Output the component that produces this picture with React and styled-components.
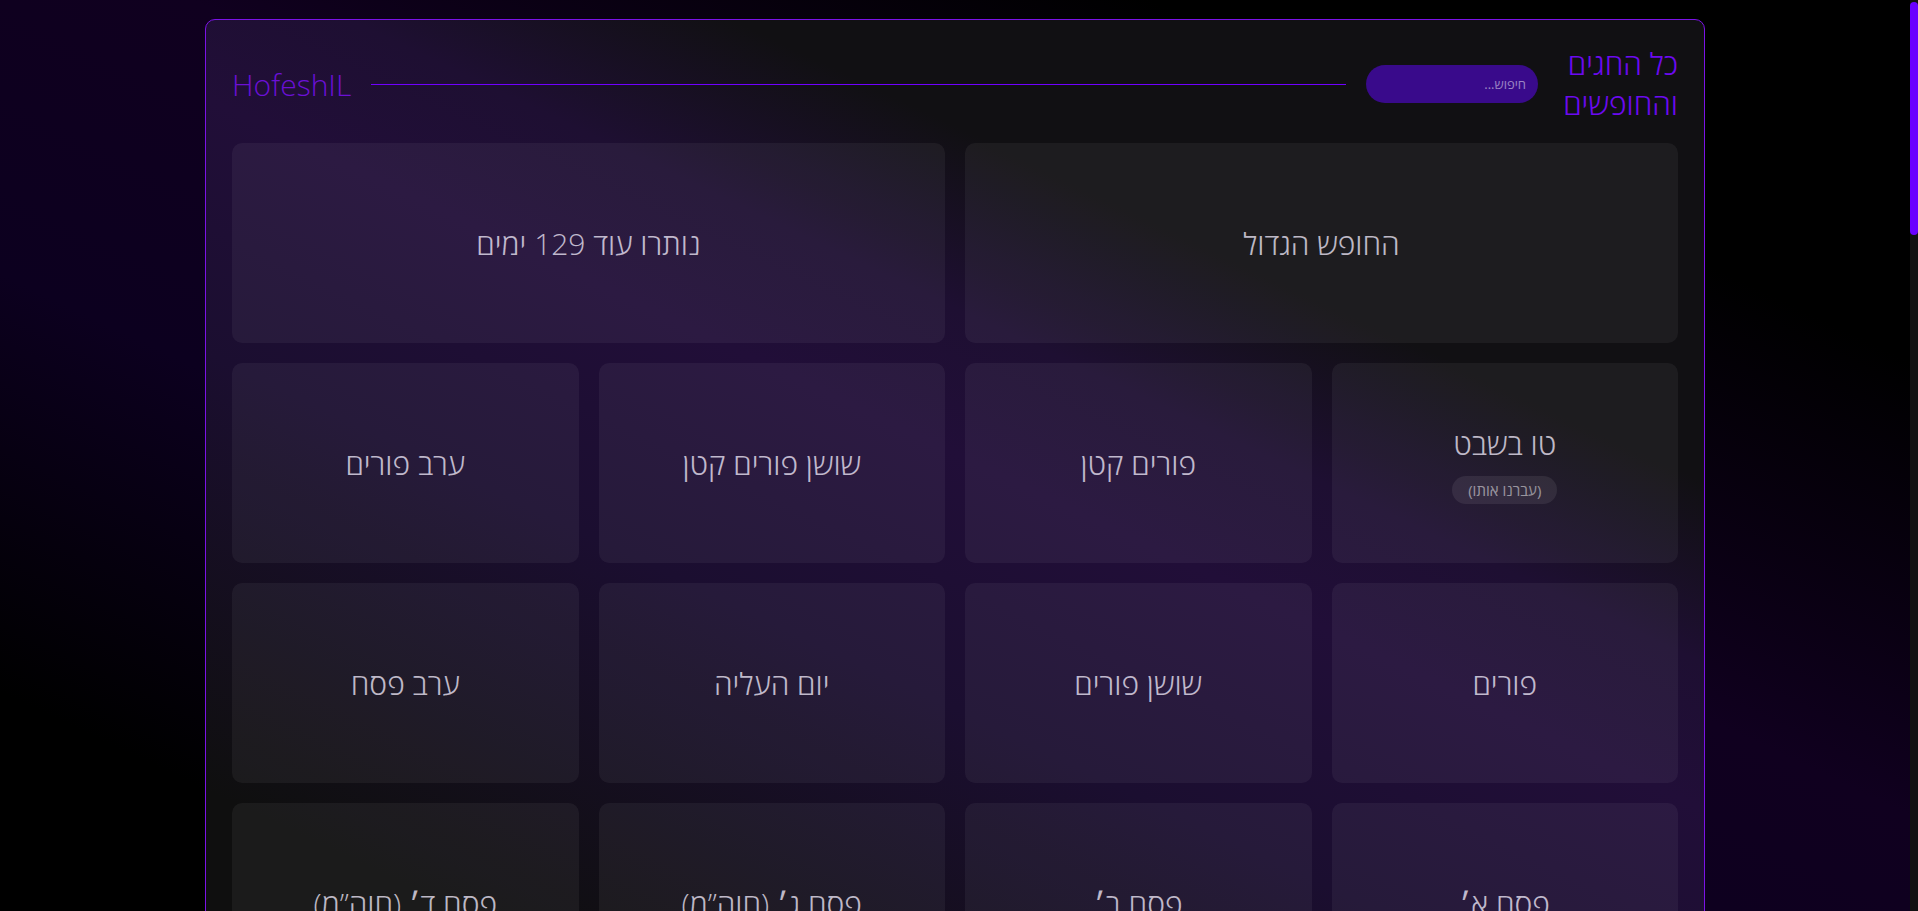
import React from 'react';
import styled, { createGlobalStyle } from 'styled-components';

const GlobalStyle = createGlobalStyle`
  html, body {
    margin: 0;
    padding: 0;
  }
  body {
    font-family: "Open Sans", "Liberation Sans", "DejaVu Sans", sans-serif;
    background: linear-gradient(to top right, #000 12%, #0c001f 35%, #10001f 55%, #000 80%);
    background-attachment: fixed;
    min-height: 100vh;
  }
  ::-webkit-scrollbar {
    width: 0;
  }
`;

const Page = styled.div`
  padding: 19px 8px 19px 0;
`;

// the page's own scrollbar is hidden in the shot, so draw the styled rail on top
const ScrollRail = styled.div`
  position: fixed;
  top: 0;
  right: 0;
  width: 8px;
  height: 100vh;
  background: #111;
  z-index: 10;
`;

const ScrollThumb = styled.div`
  margin-top: 2px;
  height: 233px;
  border-radius: 4px;
  background: #6a00ff;
`;

const Panel = styled.main`
  box-sizing: border-box;
  width: 1500px;
  margin: 0 auto;
  padding: 24px 26px 26px;
  border: 1px solid #7b12e6;
  border-radius: 10px;
  background: linear-gradient(to top right, #0f0f0f 12%, #1b0e30 36%, #210e38 50%, #1e0f32 58%, #111013 68%);
  background-attachment: fixed;
`;

const Header = styled.header`
  display: flex;
  align-items: center;
  gap: 20px;
  height: 80px;
  margin-bottom: 19px;
`;

const PageTitle = styled.h1`
  margin: 0;
  font-size: 30px;
  line-height: 40px;
  font-weight: 300;
  color: #6c0af0;
  width: 120px;
  text-align: right;
`;

const Search = styled.input`
  box-sizing: border-box;
  width: 172px;
  height: 38px;
  border: none;
  border-radius: 19px;
  padding: 0 12px;
  background: #390a8b;
  color: #ddd;
  font-family: inherit;
  font-size: 13px;
  outline: none;
  &::placeholder {
    color: rgba(255, 255, 255, 0.5);
  }
`;

const Rule = styled.div`
  flex: 1;
  height: 1px;
  background: #7000ff;
`;

const Logo = styled.div`
  font-size: 30px;
  font-weight: 300;
  color: #6b10d6;
  direction: ltr;
`;

const Grid = styled.section`
  display: grid;
  grid-template-columns: repeat(4, 1fr);
  grid-auto-rows: 200px;
  gap: 20px;
`;

const Card = styled.div`
  grid-column: span ${(p) => (p.$wide ? 2 : 1)};
  display: flex;
  flex-direction: column;
  align-items: center;
  justify-content: center;
  border-radius: 10px;
  background: rgba(255, 255, 255, 0.05);
`;

const CardTitle = styled.div`
  font-size: 30px;
  font-weight: 300;
  color: rgba(236, 230, 246, 0.78);
`;

const Passed = styled.span`
  margin-top: 12px;
  padding: 4px 16px;
  border-radius: 999px;
  background: rgba(255, 255, 255, 0.08);
  font-size: 15px;
  color: rgba(255, 255, 255, 0.5);
`;

const holidays = [
  ['טו בשבט', true],
  ['פורים קטן'],
  ['שושן פורים קטן'],
  ['ערב פורים'],
  ['פורים'],
  ['שושן פורים'],
  ['יום העליה'],
  ['ערב פסח'],
  ['פסח א׳'],
  ['פסח ב׳'],
  ['פסח ג׳ (חוה”מ)'],
  ['פסח ד׳ (חוה”מ)'],
  ['פסח ה׳ (חוה”מ)'],
  ['פסח ו׳ (חוה”מ)'],
  ['שביעי של פסח'],
  ['אסרו חג פסח'],
  ['יום השואה'],
  ['יום הזכרון'],
  ['יום העצמאות'],
  ['פסח שני'],
  ['ל”ג בעומר'],
  ['יום ירושלים'],
  ['ערב שבועות'],
  ['שבועות'],
  ['אסרו חג שבועות'],
  ['צום י”ז בתמוז'],
  ['ערב תשעה באב'],
  ['תשעה באב'],
  ['ט”ו באב'],
  ['ערב ראש השנה'],
  ['ראש השנה א׳'],
  ['ראש השנה ב׳'],
  ['צום גדליה'],
  ['ערב יום כיפור'],
  ['יום כיפור'],
  ['ערב סוכות'],
  ['סוכות'],
  ['סוכות ב׳ (חוה”מ)'],
  ['סוכות ג׳ (חוה”מ)'],
  ['סוכות ד׳ (חוה”מ)'],
  ['סוכות ה׳ (חוה”מ)'],
  ['סוכות ו׳ (חוה”מ)'],
  ['הושענא רבה'],
  ['שמחת תורה'],
  ['יום רבין'],
  ['ערב חנוכה'],
  ['חנוכה א׳'],
  ['חנוכה ב׳'],
  ['חנוכה ג׳'],
  ['חנוכה ד׳'],
  ['חנוכה ה׳'],
  ['חנוכה ו׳'],
  ['חנוכה ז׳'],
  ['חנוכה ח׳'],
  ['צום עשרה בטבת'],
  ['יום המשפחה'],
];

export default function App() {
  return (
    <Page dir="rtl">
      <GlobalStyle />
      <ScrollRail>
        <ScrollThumb />
      </ScrollRail>
      <Panel>
        <Header>
          <PageTitle>כל החגים והחופשים</PageTitle>
          <Search placeholder="חיפוש..." />
          <Rule />
          <Logo>HofeshIL</Logo>
        </Header>
        <Grid>
          <Card $wide>
            <CardTitle>החופש הגדול</CardTitle>
          </Card>
          <Card $wide>
            <CardTitle>נותרו עוד 129 ימים</CardTitle>
          </Card>
          {holidays.map(([name, passed]) => (
            <Card key={name}>
              <CardTitle>{name}</CardTitle>
              {passed && <Passed>(עברנו אותו)</Passed>}
            </Card>
          ))}
        </Grid>
      </Panel>
    </Page>
  );
}
